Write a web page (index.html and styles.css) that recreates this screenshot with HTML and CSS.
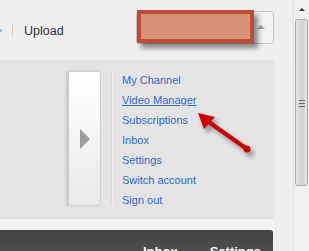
FILE: index.html
```html
<!DOCTYPE html>
<html>
    <head>
        <meta charset="UTF-8">
        <title>Account menu</title>
        <link rel="stylesheet" href="styles.css">
    </head>
    <body>
        <div class="page">
            <div class="main">
                <div class="topbar">
                    <span class="dot"></span>
                    <span class="sep"></span>
                    <span class="upload">Upload</span>
                    <div class="userbtn">
                        <span class="caret"></span>
                    </div>
                </div>
                <div class="panelrow">
                    <div class="panel">
                        <div class="card">
                            <span class="play"></span>
                        </div>
                        <div class="divider"></div>
                        <ul class="menu">
                            <li><a href="#">My Channel</a></li>
                            <li><a href="#" class="active">Video Manager</a></li>
                            <li><a href="#">Subscriptions</a></li>
                            <li><a href="#">Inbox</a></li>
                            <li><a href="#">Settings</a></li>
                            <li><a href="#">Switch account</a></li>
                            <li><a href="#">Sign out</a></li>
                        </ul>
                    </div>
                </div>
                <div class="stripe"></div>
                <div class="darkbar">
                    <span class="tab">Inbox</span>
                    <span class="tab">Settings</span>
                </div>
            </div>
            <div class="scrollbar">
                <div class="sb-up"></div>
                <div class="sb-thumb">
                    <span class="grip"></span>
                </div>
            </div>
        </div>
        <div class="redact"></div>
        <svg class="pointer" width="80" height="60" viewBox="0 0 80 60">
            <defs>
                <filter id="shade" x="-30%" y="-30%" width="160%" height="160%">
                    <feGaussianBlur stdDeviation="2"/>
                </filter>
            </defs>
            <g transform="translate(3 4)" filter="url(#shade)" fill="#777" stroke="#777" opacity="0.7">
                <line x1="57" y1="39" x2="16" y2="10" stroke-width="4"/>
                <polygon points="8,3 25,7 14,19"/>
                <circle cx="57" cy="39" r="3.5"/>
            </g>
            <g fill="#cc0000" stroke="#cc0000">
                <line x1="57" y1="39" x2="16" y2="10" stroke-width="4"/>
                <polygon points="8,3 25,7 14,19" stroke-width="0"/>
                <circle cx="57" cy="39" r="3.5" stroke-width="0"/>
            </g>
        </svg>
    </body>
</html>
```
FILE: styles.css
```css
body{
    margin: 0;
    font-family: "Liberation Sans", Arial, sans-serif;
    background: #eeeeee;
    overflow: hidden;
}
.page{
    display: flex;
    height: 251px;
}
.main{
    width: 293px;
    display: flex;
    flex-direction: column;
    overflow: hidden;
}
.topbar{
    flex-shrink: 0;
    height: 60px;
    background: #efefef;
    display: flex;
    align-items: center;
}
.dot{
    width: 2px;
    height: 3px;
    background: #8fc6ea;
    margin-top: 1px;
}
.sep{
    width: 1px;
    height: 11px;
    background: #dcc8cf;
    margin-left: 10px;
}
.upload{
    margin-left: 11px;
    font-size: 12.5px;
    color: #2e2e3a;
    margin-top: 1px;
}
.userbtn{
    margin-left: 72px;
    margin-top: -6px;
    width: 136px;
    height: 31px;
    border: 1px solid #c4c4c4;
    border-radius: 3px;
    background: #f2f2f2;
    display: flex;
    align-items: center;
    justify-content: flex-end;
}
.caret{
    width: 0;
    height: 0;
    border-left: 4px solid transparent;
    border-right: 4px solid transparent;
    border-bottom: 4px solid #9a9a9a;
    margin-right: 8px;
}
.panelrow{
    flex-shrink: 0;
    display: flex;
}
.panel{
    width: 274px;
    height: 158px;
    background: #e4e4e4;
    display: flex;
    align-items: flex-start;
}
.card{
    margin-top: 11px;
    margin-left: 68px;
    width: 31px;
    height: 133px;
    background: linear-gradient(#ffffff, #f4f4f4 50%, #e9e9e9);
    border: 1px solid #d2d2d2;
    border-left-color: #c8c8c8;
    border-radius: 0 3px 3px 0;
    box-shadow: -2px 0 3px rgba(0,0,0,.12);
    display: flex;
    align-items: center;
}
.play{
    width: 0;
    height: 0;
    border-top: 10px solid transparent;
    border-bottom: 10px solid transparent;
    border-left: 10px solid #9c9c9c;
    margin-left: 11px;
}
.divider{
    margin-top: 10px;
    margin-left: 10px;
    width: 1px;
    height: 134px;
    background: #d6d6d6;
    border-right: 1px solid #efefef;
}
.menu{
    list-style: none;
    margin: 10px 0 0 9px;
    padding: 0;
}
.menu li{
    height: 20px;
    line-height: 20px;
    font-size: 11px;
}
.menu a{
    color: #2c69c9;
    text-decoration: none;
}
.menu a.active{
    text-decoration: underline;
}
.stripe{
    flex-shrink: 0;
    width: 274px;
    height: 12px;
    background: #f2f2f2;
    border-top: 1px solid #dadada;
    box-sizing: border-box;
}
.darkbar{
    flex-shrink: 0;
    width: 273px;
    height: 40px;
    background: linear-gradient(#444444, #555555);
    border-radius: 0 3px 0 0;
    padding: 14px 0 0 143px;
    box-sizing: border-box;
    display: flex;
    gap: 32px;
}
.tab{
    color: #ffffff;
    font-weight: bold;
    font-size: 13px;
    line-height: 16px;
}
.scrollbar{
    width: 16px;
    background: #f0f0f0;
    border-left: 1px solid #e2e2e2;
    box-sizing: border-box;
}
.sb-up{
    height: 18px;
    display: flex;
    align-items: center;
    justify-content: center;
}
.sb-up:after{
    content: "";
    border-left: 3px solid transparent;
    border-right: 3px solid transparent;
    border-bottom: 3px solid #333;
}
.sb-thumb{
    margin: 1px 1px 0 1px;
    height: 167px;
    background: linear-gradient(90deg, #e4e4e4, #d2d2d2 60%, #e8e8e8);
    border: 1px solid #a8a8a8;
    border-radius: 3px;
    box-sizing: border-box;
    display: flex;
    justify-content: center;
    padding-top: 80px;
}
.grip{
    width: 6px;
    height: 7px;
    background: repeating-linear-gradient(#666 0 1px, transparent 1px 3px);
}
.redact{
    position: absolute;
    left: 137px;
    top: 10px;
    width: 117px;
    height: 33px;
    box-sizing: border-box;
    background: #d9927a;
    border: 4px solid #c14a33;
    box-shadow: 4px 5px 5px rgba(0,0,0,.45);
}
.pointer{
    position: absolute;
    left: 190px;
    top: 110px;
}
```
